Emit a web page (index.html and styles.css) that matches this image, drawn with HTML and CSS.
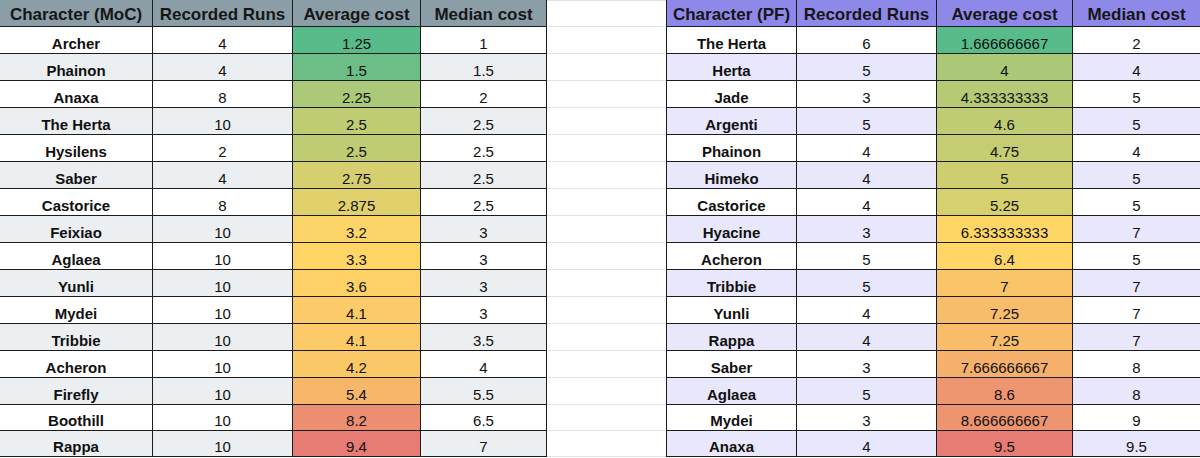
FILE: index.html
```html
<!DOCTYPE html>
<html lang="en">
<head>
<meta charset="utf-8">
<title>Character costs</title>
<link rel="stylesheet" href="styles.css">
</head>
<body>
<div class="page">
  <div class="tbl moc">
    <div class="row head"><div class="c">Character (MoC)</div><div class="c">Recorded Runs</div><div class="c">Average cost</div><div class="c">Median cost</div></div>
    <div class="row"><div class="c n">Archer</div><div class="c">4</div><div class="c" style="background:#57bb8a">1.25</div><div class="c">1</div></div>
    <div class="row alt"><div class="c n">Phainon</div><div class="c">4</div><div class="c" style="background:#6cbe86">1.5</div><div class="c">1.5</div></div>
    <div class="row"><div class="c n">Anaxa</div><div class="c">8</div><div class="c" style="background:#abc978">2.25</div><div class="c">2</div></div>
    <div class="row alt"><div class="c n">The Herta</div><div class="c">10</div><div class="c" style="background:#c0cc74">2.5</div><div class="c">2.5</div></div>
    <div class="row"><div class="c n">Hysilens</div><div class="c">2</div><div class="c" style="background:#c0cc74">2.5</div><div class="c">2.5</div></div>
    <div class="row alt"><div class="c n">Saber</div><div class="c">4</div><div class="c" style="background:#d5cf6f">2.75</div><div class="c">2.5</div></div>
    <div class="row"><div class="c n">Castorice</div><div class="c">8</div><div class="c" style="background:#e0d16d">2.875</div><div class="c">2.5</div></div>
    <div class="row alt"><div class="c n">Feixiao</div><div class="c">10</div><div class="c" style="background:#fbd567">3.2</div><div class="c">3</div></div>
    <div class="row"><div class="c n">Aglaea</div><div class="c">10</div><div class="c" style="background:#ffd566">3.3</div><div class="c">3</div></div>
    <div class="row alt"><div class="c n">Yunli</div><div class="c">10</div><div class="c" style="background:#fed167">3.6</div><div class="c">3</div></div>
    <div class="row"><div class="c n">Mydei</div><div class="c">10</div><div class="c" style="background:#fcca68">4.1</div><div class="c">3</div></div>
    <div class="row alt"><div class="c n">Tribbie</div><div class="c">10</div><div class="c" style="background:#fcca68">4.1</div><div class="c">3.5</div></div>
    <div class="row"><div class="c n">Acheron</div><div class="c">10</div><div class="c" style="background:#fbc868">4.2</div><div class="c">4</div></div>
    <div class="row alt"><div class="c n">Firefly</div><div class="c">10</div><div class="c" style="background:#f6b76b">5.4</div><div class="c">5.5</div></div>
    <div class="row"><div class="c n">Boothill</div><div class="c">10</div><div class="c" style="background:#eb8e71">8.2</div><div class="c">6.5</div></div>
    <div class="row alt"><div class="c n">Rappa</div><div class="c">10</div><div class="c" style="background:#e67c73">9.4</div><div class="c">7</div></div>
  </div>

  <div class="gap">
    <div class="g first"></div>
    <div class="g"></div><div class="g"></div><div class="g"></div><div class="g"></div>
    <div class="g"></div><div class="g"></div><div class="g"></div><div class="g"></div>
    <div class="g"></div><div class="g"></div><div class="g"></div><div class="g"></div>
    <div class="g"></div><div class="g"></div><div class="g"></div><div class="g"></div>
  </div>

  <div class="tbl pf">
    <div class="row head"><div class="c">Character (PF)</div><div class="c">Recorded Runs</div><div class="c">Average cost</div><div class="c">Median cost</div></div>
    <div class="row"><div class="c n">The Herta</div><div class="c">6</div><div class="c" style="background:#57bb8a">1.666666667</div><div class="c">2</div></div>
    <div class="row alt"><div class="c n">Herta</div><div class="c">5</div><div class="c" style="background:#aac878">4</div><div class="c">4</div></div>
    <div class="row"><div class="c n">Jade</div><div class="c">3</div><div class="c" style="background:#b6ca76">4.333333333</div><div class="c">5</div></div>
    <div class="row alt"><div class="c n">Argenti</div><div class="c">5</div><div class="c" style="background:#c0cc74">4.6</div><div class="c">5</div></div>
    <div class="row"><div class="c n">Phainon</div><div class="c">4</div><div class="c" style="background:#c5cd72">4.75</div><div class="c">4</div></div>
    <div class="row alt"><div class="c n">Himeko</div><div class="c">4</div><div class="c" style="background:#cece70">5</div><div class="c">5</div></div>
    <div class="row"><div class="c n">Castorice</div><div class="c">4</div><div class="c" style="background:#d7d06f">5.25</div><div class="c">5</div></div>
    <div class="row alt"><div class="c n">Hyacine</div><div class="c">3</div><div class="c" style="background:#fed666">6.333333333</div><div class="c">7</div></div>
    <div class="row"><div class="c n">Acheron</div><div class="c">5</div><div class="c" style="background:#ffd566">6.4</div><div class="c">5</div></div>
    <div class="row alt"><div class="c n">Tribbie</div><div class="c">5</div><div class="c" style="background:#fac469">7</div><div class="c">7</div></div>
    <div class="row"><div class="c n">Yunli</div><div class="c">4</div><div class="c" style="background:#f8bd6a">7.25</div><div class="c">7</div></div>
    <div class="row alt"><div class="c n">Rappa</div><div class="c">4</div><div class="c" style="background:#f8bd6a">7.25</div><div class="c">7</div></div>
    <div class="row"><div class="c n">Saber</div><div class="c">3</div><div class="c" style="background:#f5b16b">7.666666667</div><div class="c">8</div></div>
    <div class="row alt"><div class="c n">Aglaea</div><div class="c">5</div><div class="c" style="background:#ed966f">8.6</div><div class="c">8</div></div>
    <div class="row"><div class="c n">Mydei</div><div class="c">3</div><div class="c" style="background:#ed9470">8.666666667</div><div class="c">9</div></div>
    <div class="row alt"><div class="c n">Anaxa</div><div class="c">4</div><div class="c" style="background:#e67c73">9.5</div><div class="c">9.5</div></div>
  </div>
</div>
</body>
</html>
```

FILE: styles.css
```css
html, body {
  margin: 0;
  padding: 0;
  background: #ffffff;
}

body {
  width: 1200px;
  height: 458px;
  overflow: hidden;
  font-family: "Liberation Sans", Arial, sans-serif;
  color: #111111;
}

.page {
  display: flex;
  align-items: flex-start;
  width: 1200px;
}

.tbl {
  display: grid;
  grid-template-rows: repeat(15, 27px) 26px 26px;
  flex: none;
}

.moc {
  grid-template-columns: 153px 140px 128px 126px;
}

.pf {
  grid-template-columns: 130px 140px 136px 128px;
  border-left: 1px solid #1c1c1c;
}

.row {
  display: contents;
}

.c {
  box-sizing: border-box;
  display: flex;
  align-items: flex-end;
  justify-content: center;
  padding: 0 2px 1.5px;
  border-right: 1px solid #1c1c1c;
  border-bottom: 1px solid #1c1c1c;
  font-size: 15px;
  line-height: normal;
  white-space: nowrap;
  overflow: hidden;
  background: #ffffff;
}

.c.n {
  font-weight: bold;
}

.head .c {
  font-size: 17px;
  font-weight: bold;
  color: #161616;
}

.moc .head .c {
  background: #8b9da7;
}

.pf .head .c {
  background: #8e89e8;
}

.moc .alt .c {
  background: #eceff1;
}

.pf .alt .c {
  background: #e8e7fb;
}

.gap {
  display: grid;
  grid-template-rows: repeat(15, 27px) 26px 26px;
  width: 119px;
  flex: none;
}

.g {
  box-sizing: border-box;
  border-bottom: 1px solid #e2e2e2;
}

.g.first {
  border-top: 1px solid #e2e2e2;
}
```
